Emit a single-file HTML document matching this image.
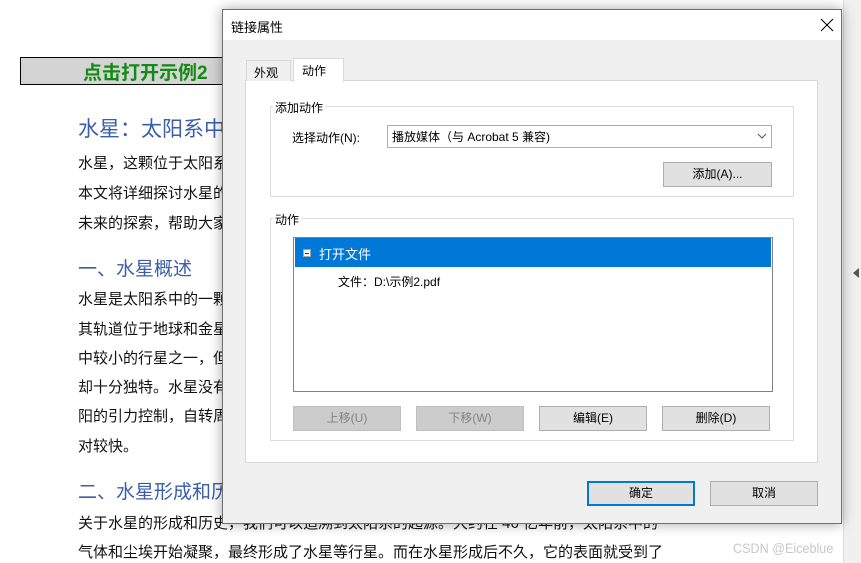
<!DOCTYPE html>
<html><head><meta charset="utf-8"><style>
*{margin:0;padding:0;box-sizing:border-box}
body{width:861px;height:563px;overflow:hidden;background:#fff;position:relative;font-family:"Liberation Sans","Microsoft YaHei","Noto Sans CJK SC",sans-serif;}
.a{position:absolute;white-space:nowrap}
.p{font-size:15px;color:#111;left:78px}
.h{font-size:19px;color:#3a5ea8;left:78px}
.dlg{position:absolute;left:222px;top:9px;width:620px;height:515px;background:#f0f0f0;border:1px solid #707070;box-shadow:0 0 12px rgba(0,0,0,.35);font-size:12px;color:#000}
.grp{position:absolute;border:1px solid #dcdcdc}
.gl{position:absolute;top:-8px;left:6px;background:#fff;padding:0 2px;font-size:12px}
.btn{position:absolute;width:108px;height:25px;background:#e1e1e1;border:1px solid #adadad;text-align:center;line-height:23px;font-size:12px}
.dis{background:#ccc;border-color:#bfbfbf;color:#838383}
</style></head><body>
<div class="a" style="left:20px;top:57px;width:260px;height:28px;background:#d4d4d4;border:1px solid #000"></div>
<div class="a" style="left:83px;top:58px;font-size:19px;font-weight:bold;color:#138a13">点击打开示例2</div>
<div class="a h" style="top:113px;font-size:21px">水星：太阳系中的独特行星</div>
<div class="a p" style="top:152px">水星，这颗位于太阳系最内侧的行星</div>
<div class="a p" style="top:182px">本文将详细探讨水星的各个方面</div>
<div class="a p" style="top:212px">未来的探索，帮助大家更好地了解</div>
<div class="a h" style="top:254px">一、水星概述</div>
<div class="a p" style="top:288px">水星是太阳系中的一颗行星</div>
<div class="a p" style="top:318px">其轨道位于地球和金星之间</div>
<div class="a p" style="top:347px">中较小的行星之一，但是</div>
<div class="a p" style="top:376px">却十分独特。水星没有卫星</div>
<div class="a p" style="top:405px">阳的引力控制，自转周期</div>
<div class="a p" style="top:435px">对较快。</div>
<div class="a h" style="top:477px">二、水星形成和历史</div>
<div class="a p" style="top:512px">关于水星的形成和历史，我们可以追溯到太阳系的起源。大约在 46 亿年前，太阳系中的</div>
<div class="a p" style="top:541px">气体和尘埃开始凝聚，最终形成了水星等行星。而在水星形成后不久，它的表面就受到了</div>
<div class="a" style="left:733px;top:540px;font-size:14px;color:#c8c8c8;transform:scaleX(.9);transform-origin:left">CSDN @Eiceblue</div>
<div class="a" style="left:843px;top:0;width:18px;height:563px;background:#f0f0f0;border-left:1px solid #ddd"></div>
<div class="a" style="left:853px;top:268px;width:0;height:0;border-top:5px solid transparent;border-bottom:5px solid transparent;border-right:6px solid #555"></div>
<div class="dlg">
 <div style="position:absolute;left:0;top:0;width:618px;height:30px;background:#fff"></div>
 <div class="a" style="left:8px;top:7px;font-size:13px">链接属性</div>
 <svg class="a" style="left:597px;top:8px" width="14" height="14"><path d="M1 1L13 13M13 1L1 13" stroke="#000" stroke-width="1.1"/></svg>
 <div class="a" style="left:22px;top:70px;width:573px;height:383px;background:#fff;border:1px solid #d9d9d9"></div>
 <div class="a" style="left:23px;top:50px;width:45px;height:21px;border:1px solid #d9d9d9;border-bottom:none;background:#f0f0f0;padding:3px 7px">外观</div>
 <div class="a" style="left:70px;top:48px;width:51px;height:24px;border:1px solid #d9d9d9;border-bottom:none;background:#fff;padding:3px 8px">动作</div>
 <div class="grp" style="left:47px;top:96px;width:524px;height:91px"><span class="gl" style="left:2px">添加动作</span></div>
 <div class="a" style="left:69px;top:119px">选择动作(N):</div>
 <div class="a" style="left:164px;top:115px;width:385px;height:23px;border:1px solid #adadad;background:#fff;padding:2px 4px">播放媒体（与 Acrobat 5 兼容)</div>
 <svg class="a" style="left:533px;top:122px" width="12" height="8"><path d="M2 2L6 6L10 2" stroke="#555" fill="none"/></svg>
 <div class="btn" style="left:440px;top:152px;width:109px">添加(A)...</div>
 <div class="grp" style="left:47px;top:208px;width:524px;height:223px"><span class="gl" style="left:2px">动作</span></div>
 <div class="a" style="left:70px;top:227px;width:480px;height:155px;border:1px solid #828282;background:#fff"></div>
 <div class="a" style="left:72px;top:228px;width:476px;height:29px;background:#0078d7"></div>
 <div class="a" style="left:80px;top:239px;width:8px;height:8px;background:#fff;border:1px solid #aaa"><div style="margin:2.5px 1px;height:1px;background:#333"></div></div>
 <div class="a" style="left:96px;top:234px;color:#fff;font-size:13px">打开文件</div>
 <div class="a" style="left:115px;top:263px">文件：D:\示例2.pdf</div>
 <div class="btn dis" style="left:70px;top:396px">上移(U)</div>
 <div class="btn dis" style="left:193px;top:396px">下移(W)</div>
 <div class="btn" style="left:316px;top:396px">编辑(E)</div>
 <div class="btn" style="left:439px;top:396px">删除(D)</div>
 <div class="btn" style="left:364px;top:471px;border:2px solid #0078d7;line-height:21px">确定</div>
 <div class="btn" style="left:487px;top:471px">取消</div>
</div>
</body></html>
